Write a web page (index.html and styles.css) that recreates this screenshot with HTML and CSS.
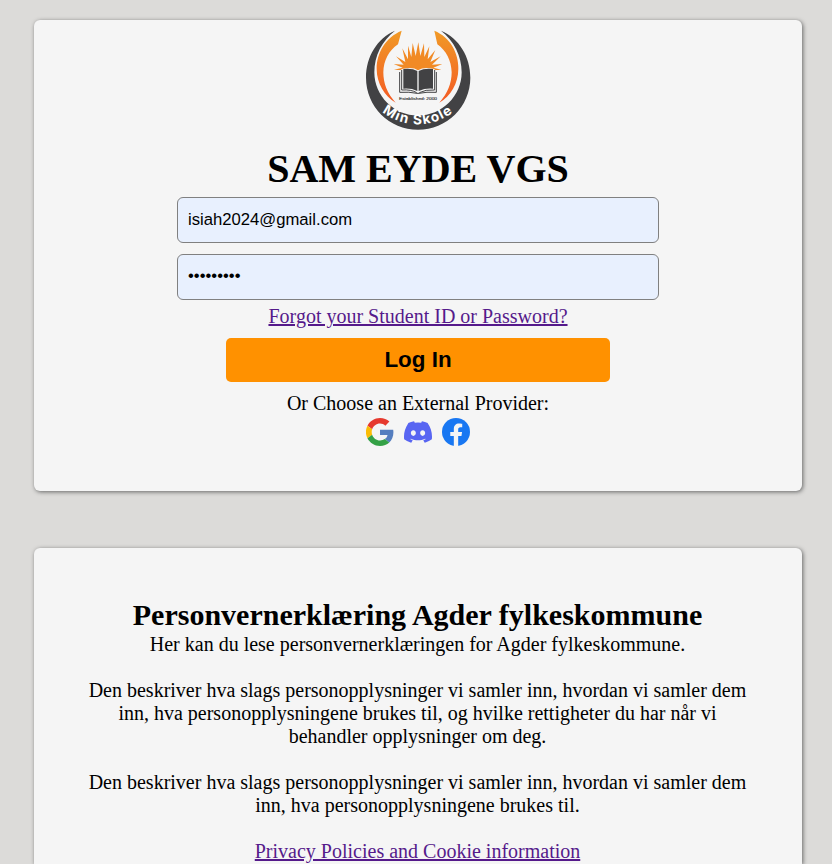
FILE: index.html
```html
<!DOCTYPE html>
<html lang="no">
<head>
<meta charset="utf-8">
<title>SAM EYDE VGS</title>
<link rel="stylesheet" href="styles.css">
</head>
<body>
<main>
<section class="card login">
  <svg class="logo" viewBox="0 0 360 360" role="img" aria-label="Min Skole">
    <defs>
      <linearGradient id="flame" x1="0" y1="0" x2="0" y2="1"><stop offset="0" stop-color="#f19a26"/><stop offset="1" stop-color="#f35a24"/></linearGradient>
      <path id="arc" d="M60 264A172 172 0 0 0 300 264"/>
    </defs>
    <path fill="#424244" d="M111 32C58 55 24 109 24 173C24 260 94 329 180 329S337 260 337 173C337 109 303 55 249 32C288 62 311 108 311 157C311 228 252 287 180 287S49 228 49 157C49 107 72 62 111 32Z"/>
    <path fill="url(#flame)" d="M131 32C83 52 56 98 56 146C56 190 80 228 113 248C87 220 76 190 76 157C77 122 92 92 120 73Z"/>
    <path fill="url(#flame)" d="M229 32C277 52 301 98 301 146C301 190 278 228 244 248C269 220 281 190 281 157C280 122 265 92 238 73Z"/>
    <path fill="#f18a25" d="M134 151L108 149 134 143 107 132 137 134 114 109 142 126 133 85 150 118 150 77 160 111 164 69 173 108 181 67 187 108 198 70 199 111 214 79 209 118 232 90 217 126 248 109 222 134 253 132 226 143 250 149 226 151Z"/>
    <path fill="#f5f5f5" d="M132 147Q165 139 180 151Q198 139 228 147L238 154V221H122V154Z"/>
    <path fill="#424244" d="M136 147Q163 144 178 153V213Q160 204 136 206ZM225 147Q198 144 182 153V213Q202 204 225 206Z"/>
    <path fill="none" stroke="#424244" stroke-width="3" d="M131 150V210Q160 208 176 218M125 156V217Q154 215 177 220H183Q205 215 235 217V156M230 150V210Q202 208 184 218"/>
    <text class="established" x="180" y="241" textLength="114" lengthAdjust="spacingAndGlyphs">Established: 2000</text>
    <text class="logo-name"><textPath href="#arc" startOffset="50%">Min Skole</textPath></text>
  </svg>
  <h1>SAM EYDE VGS</h1>
  <form>
    <input type="text" value="isiah2024@gmail.com" aria-label="Student ID">
    <input type="password" value="isiah2024" aria-label="Password">
    <a href="#">Forgot your Student ID or Password?</a>
    <button type="button">Log In</button>
  </form>
  <p>Or Choose an External Provider:</p>
  <div class="providers">
    <svg viewBox="0 0 48 48" aria-label="Google">
      <path fill="#e6392e" d="M24 9.5c3.5 0 6.7 1.2 9.2 3.6l6.9-6.9C35.9 2.4 30.5 0 24 0 14.6 0 6.5 5.4 2.6 13.2l8 6.2C12.4 13.7 17.7 9.5 24 9.5z"/>
      <path fill="#557ebf" d="M47 24.6c0-1.6-.2-3.1-.4-4.6H24v9h12.9c-.6 3-2.2 5.5-4.7 7.2l7.7 6C44.4 38 47 31.800 47 24.600z"/>
      <path fill="#fbbc05" d="M10.500 28.600A14.500 14.500 0 0 1 10.500 19.400l-8-6.200a24 24 0 0 0 0 21.600z"/>
      <path fill="#34a146" d="M24 48c6.500 0 11.900-2.100 15.900-5.800l-7.700-6c-2.200 1.500-4.900 2.300-8.200 2.300-6.300 0-11.600-4.200-13.500-9.900l-8 6.200C6.500 42.600 14.600 48 24 48z"/>
    </svg>
    <svg viewBox="0 0 24 24" aria-label="Discord"><path fill="#5865f2" d="M20.317 4.370a19.791 19.791 0 0 0-4.885-1.515.074.074 0 0 0-.079.037c-.21.375-.444.864-.608 1.250a18.270 18.270 0 0 0-5.487 0 12.640 12.640 0 0 0-.617-1.250.077.077 0 0 0-.079-.037A19.736 19.736 0 0 0 3.677 4.370a.070.070 0 0 0-.032.027C.533 9.046-.320 13.580.099 18.058a.082.082 0 0 0 .031.057 19.900 19.900 0 0 0 5.993 3.030.078.078 0 0 0 .084-.028c.462-.630.874-1.295 1.226-1.994a.076.076 0 0 0-.041-.106 13.107 13.107 0 0 1-1.872-.892.077.077 0 0 1-.008-.128l.372-.292a.074.074 0 0 1 .077-.010c3.928 1.793 8.180 1.793 12.062 0a.074.074 0 0 1 .078.010l.373.292a.077.077 0 0 1-.006.127 12.299 12.299 0 0 1-1.873.892.077.077 0 0 0-.041.107c.360.698.772 1.362 1.225 1.993a.076.076 0 0 0 .084.028 19.839 19.839 0 0 0 6.002-3.030.077.077 0 0 0 .032-.054c.500-5.177-.838-9.674-3.549-13.660a.061.061 0 0 0-.031-.030zM8.020 15.330c-1.183 0-2.157-1.085-2.157-2.419 0-1.333.956-2.419 2.157-2.419 1.210 0 2.176 1.096 2.157 2.420 0 1.333-.956 2.418-2.157 2.418zm7.975 0c-1.183 0-2.157-1.085-2.157-2.419 0-1.333.955-2.419 2.157-2.419 1.210 0 2.176 1.096 2.157 2.420 0 1.333-.946 2.418-2.157 2.418z"/></svg>
    <svg viewBox="0 0 24 24" aria-label="Facebook"><circle cx="12" cy="12" r="12" fill="#1877f2"/><path fill="#f5f5f5" d="M10.125 23.900V15.500H7.080V12h3.045V9.360c0-3 1.790-4.660 4.530-4.660 1.310 0 2.680.230 2.680.230v2.950h-1.510c-1.490 0-1.950.920-1.950 1.870V12h3.330l-.53 3.500h-2.800v8.400z"/></svg>
  </div>
</section>
<section class="card privacy">
  <h2>Personvernerklæring Agder fylkeskommune</h2>
  <p>Her kan du lese personvernerklæringen for Agder fylkeskommune.</p>
  <p>Den beskriver hva slags personopplysninger vi samler inn, hvordan vi samler dem inn, hva personopplysningene brukes til, og hvilke rettigheter du har når vi behandler opplysninger om deg.</p>
  <p>Den beskriver hva slags personopplysninger vi samler inn, hvordan vi samler dem inn, hva personopplysningene brukes til.</p>
  <a href="#">Privacy Policies and Cookie information</a>
</section>
</main>
</body>
</html>
```
FILE: styles.css
```css
* { box-sizing: border-box; margin: 0; padding: 0; }
body {
  background: #dcdbd9;
  color: #000;
  font: 20px/23px "Liberation Serif", "Times New Roman", serif;
}
main {
  display: flow-root;
  height: 864px;
  padding: 20px 30px 0 34px;
  overflow: hidden;
}
.card {
  background: #f5f5f5;
  border-radius: 6px;
  box-shadow: 1px 1px 4px #666;
  text-align: center;
}
.login { height: 471px; display: flex; flex-direction: column; align-items: center; }
.logo { width: 120px; height: 120px; flex: none; }
.established { font: 13px "Liberation Sans", sans-serif; fill: #424244; stroke: #424244; stroke-width: .5px; text-anchor: middle; }
.logo-name { font: 700 41px Inter, "Liberation Sans", sans-serif; letter-spacing: 4px; fill: #fff; text-anchor: middle; }
h1 { font-size: 40px; line-height: 46px; margin-top: 6px; }
form { display: flex; flex-direction: column; align-items: center; margin-top: 5px; }
input {
  width: 482px;
  height: 46px;
  padding: 0 10px 1px;
  margin-bottom: 11px;
  border: 1px solid #808080;
  border-radius: 6px;
  background: #e8f0fe;
  color: #000;
  font: 16.670px "Liberation Sans", Arial, sans-serif;
}
input[type="password"] { margin-bottom: 5px; padding-bottom: 3px; }
a { color: #551a8b; text-decoration: underline; }
button {
  width: 384px;
  height: 44px;
  margin: 10px 0;
  padding-bottom: 1px;
  border: 0;
  border-radius: 5px;
  background: #ff9100;
  color: #000;
  font: 700 22.400px "Liberation Sans", Arial, sans-serif;
}
.providers { display: flex; gap: 10px; margin-top: 3px; }
.providers svg { width: 28px; height: 28px; }
.privacy { height: 316px; margin-top: 57px; padding: 50px 51px 0 50px; border-radius: 6px 6px 0 0; }
h2 { font-size: 30px; line-height: 34px; padding-bottom: 1px; }
.privacy p { margin-bottom: 23px; }
```
